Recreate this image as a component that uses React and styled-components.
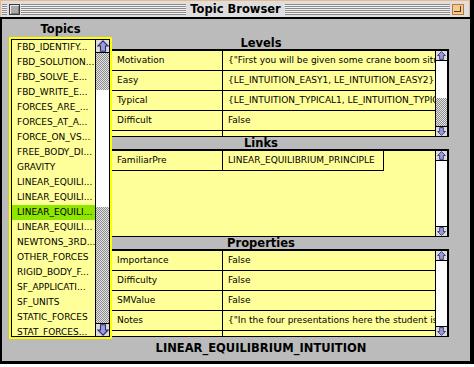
import React from 'react';
import styled, { createGlobalStyle } from 'styled-components';

const GlobalStyle = createGlobalStyle`
  html, body { margin: 0; padding: 0; background: #ffffff; overflow: hidden; }
  body { width: 474px; height: 367px; font-family: "DejaVu Sans", sans-serif; color: #000; }
  * { box-sizing: border-box; }
`;

const Window = styled.div`
  width: 474px;
  border-right: 4px solid #000;
  display: flex;
  flex-direction: column;
`;

const TitleBar = styled.div`
  height: 17px;
  border: 1px solid #e9b98a;
  border-bottom: none;
  background: #dedede;
  display: flex;
  align-items: flex-start;
  padding: 3px 5px 0 1px;
`;

const Stripes = styled.div`
  height: 11px;
  flex: ${(p) => (p.$w ? `0 0 ${p.$w}px` : '1 1 auto')};
  background: repeating-linear-gradient(to bottom, #8a8a8a 0 1px, #f2f2f2 1px 2px);
`;

const CloseBox = styled.div`
  width: 11px;
  height: 11px;
  margin: 0 1px 0 2px;
  border: 1px solid #3c3c3c;
  background: #a9a9a9;
  box-shadow: inset 1px 1px 0 #e6e6e6, inset -1px -1px 0 #7a7a7a;
`;

const Title = styled.div`
  padding: 0 4px;
  font-family: "DejaVu Sans", sans-serif;
  font-weight: bold;
  font-size: 11.5px;
  line-height: 11px;
  white-space: nowrap;
`;

const ZoomBox = styled.div`
  position: relative;
  width: 12px;
  height: 11px;
  margin-left: 2px;
  border: 1px solid #b8783c;
  background: #f3c992;
  &::after {
    content: '';
    position: absolute;
    left: 1px;
    top: 1px;
    width: 6px;
    height: 5px;
    border-right: 1px solid #5a3a1a;
    border-bottom: 1px solid #5a3a1a;
  }
`;

const Content = styled.div`
  height: 347px;
  border-top: 2px solid #000;
  border-left: 2px solid #000;
  border-bottom: 3px solid #000;
  background: #bbbbbb;
  display: grid;
  grid-template-columns: 103px 337px;
  align-content: start;
  padding-left: 7px;
`;

const Column = styled.div`
  display: flex;
  flex-direction: column;
  padding-top: ${(p) => p.$top || 0}px;
`;

const BoldLabel = styled.div`
  font-family: "DejaVu Sans", sans-serif;
  font-weight: bold;
  font-size: 11.5px;
  white-space: nowrap;
  text-align: center;
`;

const TopicsHeader = styled(BoldLabel)`
  height: 18px;
  padding-top: 3px;
  line-height: 14px;
`;

const SectionHeader = styled(BoldLabel)`
  height: 12px;
  line-height: 12px;
  padding-right: 39px;
`;

const BottomLabel = styled(BoldLabel)`
  grid-column: 2;
  padding-top: 2px;
  padding-right: 39px;
  line-height: 14px;
`;

const TopicsFrame = styled.div`
  height: 302px;
  border: 2px solid #ffff00;
`;

const TopicsInner = styled.div`
  height: 100%;
  border: 1px solid #000;
  display: flex;
`;

const TopicList = styled.div`
  flex: 1;
  background: #ffff99;
  overflow: hidden;
`;

const TopicRow = styled.div`
  height: 15px;
  line-height: 15px;
  padding-left: 5px;
  font-size: 9px;
  white-space: nowrap;
  background: ${(p) => (p.$selected ? '#8fe600' : 'transparent')};
`;

const ScrollBar = styled.div`
  flex: 0 0 ${(p) => p.$w}px;
  border-left: 1px solid #000;
  display: flex;
  flex-direction: column;
  background: #ffffff;
`;

const ArrowButton = styled.div`
  flex: 0 0 ${(p) => p.$h}px;
  background: #dcdcdc;
  display: flex;
  align-items: center;
  justify-content: center;
  ${(p) => (p.$down ? 'border-top: 1px solid #000;' : 'border-bottom: 1px solid #000;')}
`;

const Track = styled.div`
  flex: 1;
  display: flex;
  flex-direction: column;
  background: #ffffff;
`;

const Stipple = styled.div`
  flex: ${(p) => (p.$h ? `0 0 ${p.$h}px` : '1 1 auto')};
  background: repeating-conic-gradient(#8c8c8c 0 25%, #e4e4e4 0 50%) 0 0 / 2px 2px;
`;

const Thumb = styled.div`
  flex: 0 0 ${(p) => p.$h}px;
  background: #ffffff;
`;

const Panel = styled.div`
  height: 88px;
  border-top: 2px solid #000;
  border-bottom: 1px solid #000;
  border-right: 2px solid #000;
  background: #ffff99;
  display: flex;
`;

const PanelBody = styled.div`
  flex: 1;
  overflow: hidden;
  display: flex;
  flex-direction: column;
  align-items: flex-start;
`;

const Row = styled.div`
  display: grid;
  grid-template-columns: 111px ${(p) => (p.$valueWidth ? `${p.$valueWidth}px` : '212px')};
  flex: 0 0 20px;
  height: 20px;
  border-bottom: 1px solid #000;
  font-size: 9px;
`;

const Cell = styled.div`
  line-height: 19px;
  padding-left: 5px;
  white-space: nowrap;
  overflow: hidden;
  border-right: ${(p) => (p.$divider ? '1px solid #000' : 'none')};
`;

const Arrow = ({ down, size }) => (
  <svg width={size} height={size} viewBox="0 0 12 12" style={{ display: 'block' }}>
    <g transform={down ? 'rotate(180 6 6)' : undefined}>
      <polygon
        points="6,0.8 11.2,6 8.5,6 8.5,11.2 3.5,11.2 3.5,6 0.8,6"
        fill="#9c9cda"
        stroke="#2b2b6b"
        strokeWidth="1.1"
        strokeLinejoin="miter"
      />
    </g>
  </svg>
);

const Scroller = ({ w, btn, arrow, segments }) => (
  <ScrollBar $w={w}>
    <ArrowButton $h={btn}>
      <Arrow size={arrow} />
    </ArrowButton>
    <Track>
      {segments.map((s, i) =>
        s.type === 'thumb' ? <Thumb key={i} $h={s.h} /> : <Stipple key={i} $h={s.h} />
      )}
    </Track>
    <ArrowButton $h={btn} $down>
      <Arrow size={arrow} down />
    </ArrowButton>
  </ScrollBar>
);

const topics = [
  'FBD_IDENTIFY...',
  'FBD_SOLUTION...',
  'FBD_SOLVE_E...',
  'FBD_WRITE_E...',
  'FORCES_ARE_...',
  'FORCES_AT_A...',
  'FORCE_ON_VS...',
  'FREE_BODY_DI...',
  'GRAVITY',
  'LINEAR_EQUILI...',
  'LINEAR_EQUILI...',
  'LINEAR_EQUILI...',
  'LINEAR_EQUILI...',
  'NEWTONS_3RD...',
  'OTHER_FORCES',
  'RIGID_BODY_F...',
  'SF_APPLICATI...',
  'SF_UNITS',
  'STATIC_FORCES',
  'STAT_FORCES...',
];

const levels = [
  ['Motivation', '{"First you will be given some crane boom situations in which the forces'],
  ['Easy', '{LE_INTUITION_EASY1, LE_INTUITION_EASY2}'],
  ['Typical', '{LE_INTUITION_TYPICAL1, LE_INTUITION_TYPICAL2}'],
  ['Difficult', 'False'],
  ['', ''],
];

const properties = [
  ['Importance', 'False'],
  ['Difficulty', 'False'],
  ['SMValue', 'False'],
  ['Notes', '{"In the four presentations here the student is shown'],
  ['', ''],
];

const Table = ({ rows, valueWidth }) => (
  <PanelBody>
    {rows.map(([k, v], i) => (
      <Row key={i} $valueWidth={valueWidth}>
        <Cell $divider>{k}</Cell>
        <Cell $divider={!!valueWidth}>{v}</Cell>
      </Row>
    ))}
  </PanelBody>
);

export default function App() {
  return (
    <>
      <GlobalStyle />
      <Window>
        <TitleBar>
          <Stripes $w={5} />
          <CloseBox />
          <Stripes />
          <Title>Topic Browser</Title>
          <Stripes />
          <ZoomBox />
        </TitleBar>
        <Content>
          <Column>
            <TopicsHeader>Topics</TopicsHeader>
            <TopicsFrame>
              <TopicsInner>
                <TopicList>
                  {topics.map((t, i) => (
                    <TopicRow key={i} $selected={i === 11}>
                      {t}
                    </TopicRow>
                  ))}
                </TopicList>
                <Scroller
                  w={14}
                  btn={13}
                  arrow={12}
                  segments={[
                    { type: 'stipple', h: 37 },
                    { type: 'thumb', h: 117 },
                    { type: 'stipple' },
                  ]}
                />
              </TopicsInner>
            </TopicsFrame>
          </Column>
          <Column $top={18}>
            <SectionHeader>Levels</SectionHeader>
            <Panel>
              <Table rows={levels} />
              <Scroller
                w={12}
                btn={10}
                arrow={9}
                segments={[{ type: 'thumb', h: 37 }, { type: 'stipple' }]}
              />
            </Panel>
            <SectionHeader>Links</SectionHeader>
            <Panel>
              <Table rows={[['FamiliarPre', 'LINEAR_EQUILIBRIUM_PRINCIPLE']]} valueWidth={161} />
              <Scroller w={12} btn={10} arrow={9} segments={[]} />
            </Panel>
            <SectionHeader>Properties</SectionHeader>
            <Panel>
              <Table rows={properties} />
              <Scroller w={12} btn={10} arrow={9} segments={[]} />
            </Panel>
          </Column>
          <BottomLabel>LINEAR_EQUILIBRIUM_INTUITION</BottomLabel>
        </Content>
      </Window>
    </>
  );
}
